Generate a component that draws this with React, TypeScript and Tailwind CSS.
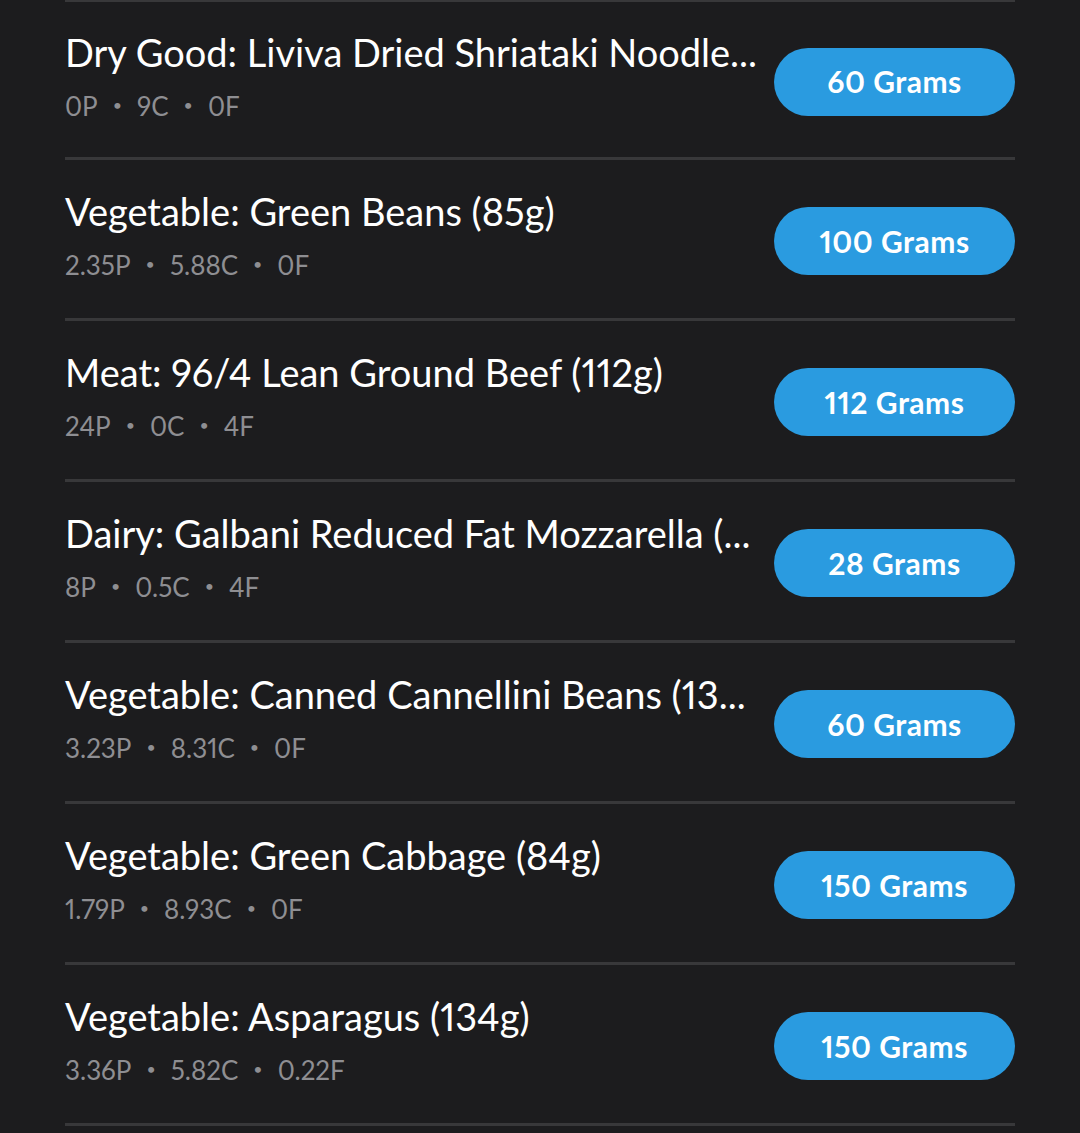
import React from 'react'

const foods = [
    { name: 'Dry Good: Liviva Dried Shriataki Noodle...', p: '0P', c: '9C', f: '0F', grams: 60 },
    { name: 'Vegetable: Green Beans (85g)', p: '2.35P', c: '5.88C', f: '0F', grams: 100 },
    { name: 'Meat: 96/4 Lean Ground Beef (112g)', p: '24P', c: '0C', f: '4F', grams: 112 },
    { name: 'Dairy: Galbani Reduced Fat Mozzarella (...', p: '8P', c: '0.5C', f: '4F', grams: 28 },
    { name: 'Vegetable: Canned Cannellini Beans (13...', p: '3.23P', c: '8.31C', f: '0F', grams: 60 },
    { name: 'Vegetable: Green Cabbage (84g)', p: '1.79P', c: '8.93C', f: '0F', grams: 150 },
    { name: 'Vegetable: Asparagus (134g)', p: '3.36P', c: '5.82C', f: '0.22F', grams: 150 },
]

const Dot = () => <span className="mx-[15px] text-[16px] relative -top-[1px]">•</span>

const FoodRow = ({ food, first }: { food: typeof foods[number]; first: boolean }) => (
    <div className={'flex items-center border-b-[3px] border-[#38383a] ' + (first ? 'h-[158px]' : 'h-[161px]')}>
        <div className="flex-1 min-w-0 -mt-[9px]">
            <div className="text-[38px] text-white leading-[46px] whitespace-nowrap">{food.name}</div>
            <div className="mt-[15px] text-[26px] text-[#8e8e92] leading-[32px] flex items-center">
                <span>{food.p}</span>
                <Dot />
                <span>{food.c}</span>
                <Dot />
                <span>{food.f}</span>
            </div>
        </div>
        <button className="ml-[30px] mt-[4px] w-[241px] h-[68px] shrink-0 rounded-full bg-[#2a9be0] text-white text-[30px] font-bold tracking-[0.5px]">
            {food.grams} Grams
        </button>
    </div>
)

const App = () => {
    return (
        <div className="min-h-screen bg-[#1c1c1e] font-['Lato','Open_Sans',sans-serif] proportional-nums">
            <div className="px-[65px]">
                <div className="h-[2px] bg-[#38383a]"></div>
                {foods.map((food, i) => <FoodRow key={i} food={food} first={i === 0} />)}
            </div>
        </div>
    )
}

export default App
